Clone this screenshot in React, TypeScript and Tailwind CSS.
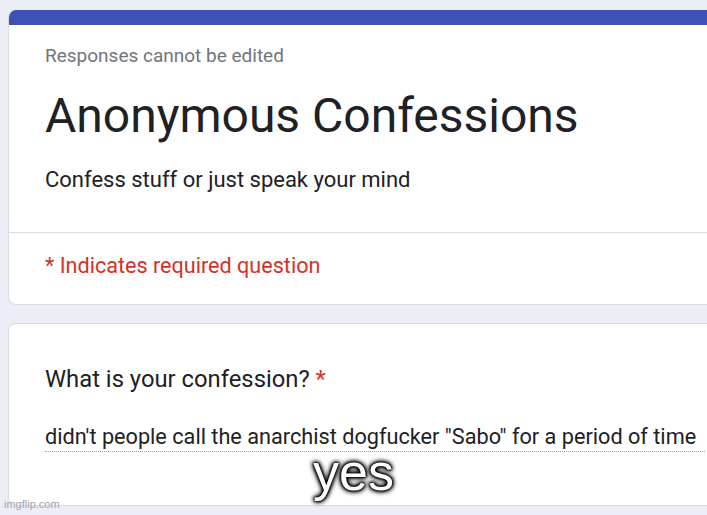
export default function App() {
  return (
    <div className="relative w-[707px] h-[515px] overflow-hidden bg-[#ebedf7] pl-2 pt-[10px] font-['Roboto',sans-serif] text-[#202124]">
      {/* Header card */}
      <div className="w-[760px] overflow-hidden rounded-lg border border-[#dadce0] border-t-0 bg-white">
        <div className="h-[15px] bg-[#3f51b5]" />
        <div className="px-9 pt-[19px] pb-[38px]">
          <div className="text-[19px] leading-[24px] text-[#70757a]">Responses cannot be edited</div>
          <h1 className="mt-[20px] text-[48px] leading-[56px]">Anonymous Confessions</h1>
          <div className="mt-[22px] text-[22px] leading-[28px]">Confess stuff or just speak your mind</div>
        </div>
        <div className="border-t border-[#dadce0] px-9 pt-[20px] pb-[25px]">
          <div className="text-[21.6px] leading-[26px] text-[#d93025]">* Indicates required question</div>
        </div>
      </div>

      {/* Question card */}
      <div className="mt-[18px] w-[760px] rounded-lg border border-[#dadce0] bg-white px-9 pt-[40px] pb-[53px]">
        <div className="text-[23.8px] leading-[30px]">
          What is your confession? <span className="text-[#d93025]">*</span>
        </div>
        <div className="mt-[30px] w-[660px] border-b border-dotted border-[#9aa0a6] pb-[1px] text-[21.7px] leading-[26px]">
          didn't people call the anarchist dogfucker "Sabo" for a period of time
        </div>
      </div>

      {/* Meme caption */}
      <div className="absolute left-0 right-0 top-[452px] text-center font-['Liberation_Sans',sans-serif] text-[52px] leading-[40px] text-white [text-shadow:0_0_6px_#000,0_0_5px_#000,0_0_4px_#000,0_0_3px_#000,0_0_2px_#000,0_0_1px_#000]">
        yes
      </div>
      <div className="absolute left-1 top-[499px] font-['Liberation_Sans',sans-serif] text-[11px] leading-[11px] text-[#a3a3a8]">
        imgflip.com
      </div>
    </div>
  );
}
